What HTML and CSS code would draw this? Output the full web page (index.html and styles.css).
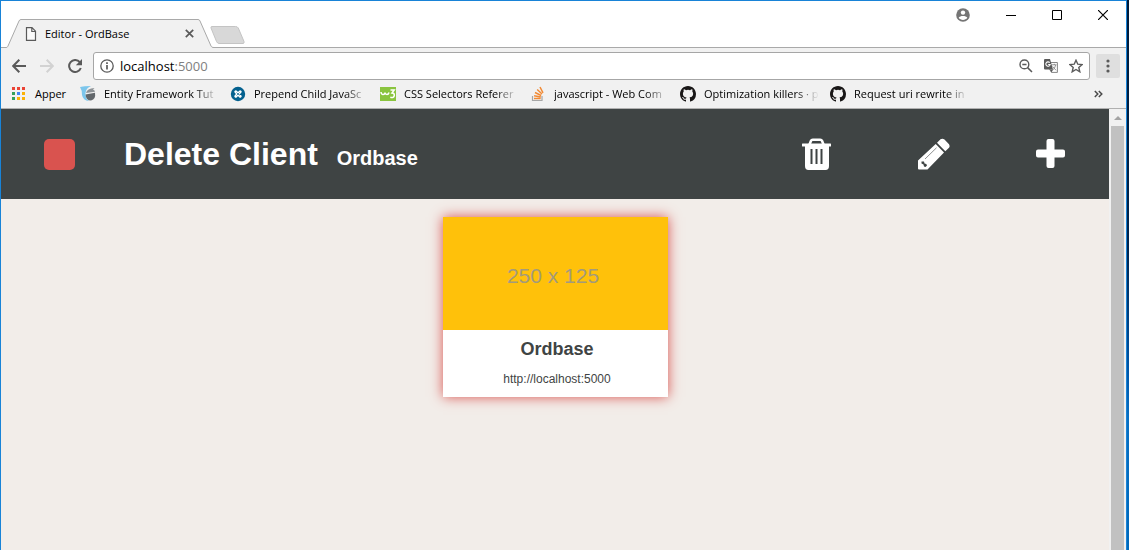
FILE: index.html
```html
<!DOCTYPE html>
<html lang="en">
<head>
<meta charset="utf-8">
<title>Editor - OrdBase</title>
<link rel="stylesheet" href="styles.css">
</head>
<body>
<div class="window">
  <div class="tabstrip">
    <div class="tab">
      <svg class="tab-shape" viewBox="0 0 208 29" preserveAspectRatio="none"><path d="M0 28.5C1 28.5 1.5 28 2 27L13 2Q13.600 .5 15 .5H192Q193.500 .5 194 2L205 27C205.500 28 206.500 28.500 208 28.500V29H0Z" fill="#f1f1f1"/><path d="M0 28.500C1 28.500 1.500 28 2 27L13 2Q13.600 .5 15 .5H192Q193.500 .5 194 2L205 27C205.500 28 206.500 28.500 208 28.500" fill="none" stroke="#a9a9a9"/></svg>
      <svg class="page-icon" width="12" height="14" viewBox="0 0 12 14"><path d="M1.500 .7H7L10.500 4.200V13.300H1.500ZM6.800 .7V4.500H10.500" fill="#fafafa" stroke="#5a5a5a" stroke-width="1.200"/></svg>
      <span class="tab-title">Editor - OrdBase</span>
      <button class="plain" aria-label="Close tab"><svg width="9" height="9" viewBox="0 0 9 9"><path d="M.8.8 8.200 8.200M8.200.8.8 8.200" stroke="#5a5a5a" stroke-width="1.700"/></svg></button>
    </div>
    <button class="plain new-tab" aria-label="New tab"><svg width="35" height="18" viewBox="0 0 35 18"><path d="M2 .5H25.500Q27.500 .5 28.300 2L34 15.500Q34.500 17.500 33 17.500H9Q7.500 17.500 6.500 15.500L1 2Q.5 .5 2 .5Z" fill="#d8d8d8" stroke="#c4c4c4"/></svg></button>
    <div class="window-buttons">
      <button class="plain" aria-label="Profile"><svg width="14" height="14" viewBox="0 0 14 14"><circle cx="7" cy="7" r="6.800" fill="#757575"/><circle cx="7" cy="4.600" r="2.200" fill="#fff"/><path d="M2.700 9.800C3.800 7.400 10.200 7.400 11.300 9.800 9.500 12.600 4.500 12.600 2.700 9.800Z" fill="#fff"/></svg></button>
      <button class="plain" aria-label="Minimize"><svg width="10" height="10" viewBox="0 0 10 10"><path d="M0 5.500H10" stroke="#000"/></svg></button>
      <button class="plain" aria-label="Maximize"><svg width="10" height="10" viewBox="0 0 10 10"><path d="M.5.5H9.500V9.500H.5Z" fill="none" stroke="#000"/></svg></button>
      <button class="plain" aria-label="Close"><svg width="10" height="10" viewBox="0 0 10 10"><path d="M0 0 10 10M10 0 0 10" stroke="#000" stroke-width="1.200"/></svg></button>
    </div>
  </div>

  <div class="toolbar">
    <div class="nav">
      <button class="plain" aria-label="Back"><svg width="14" height="14" viewBox="0 0 14 14"><path d="M14 7H1.500M7.300 .8 1.200 7 7.300 13.200" fill="none" stroke="#5a5a5a" stroke-width="2"/></svg></button>
      <button class="plain" aria-label="Forward"><svg width="14" height="14" viewBox="0 0 14 14"><path d="M0 7H12.500M6.700 .8 12.800 7 6.700 13.200" fill="none" stroke="#d2d2d2" stroke-width="2"/></svg></button>
      <button class="plain" aria-label="Reload"><svg width="14" height="14" viewBox="0 0 14 14"><path d="M11.800 3.200A6 6 0 1 0 12.800 9" fill="none" stroke="#5a5a5a" stroke-width="2"/><path d="M14 0V6.200H7.800Z" fill="#5a5a5a"/></svg></button>
    </div>
    <div class="omnibox">
      <svg width="14" height="14" viewBox="0 0 14 14"><circle cx="7" cy="7" r="6.200" fill="none" stroke="#5a5a5a" stroke-width="1.300"/><path d="M7 6V10.500M7 3.200V5" stroke="#5a5a5a" stroke-width="1.700"/></svg>
      <a class="address" href="#">localhost<span class="port">:5000</span></a>
      <button class="plain" aria-label="Zoom"><svg width="14" height="14" viewBox="0 0 14 14"><circle cx="5.400" cy="5.400" r="4.400" fill="none" stroke="#5a5a5a" stroke-width="1.400"/><path d="M3.300 5.400H7.500M8.600 8.600 13 13" stroke="#5a5a5a" stroke-width="1.500"/></svg></button>
      <button class="plain" aria-label="Translate"><svg width="14" height="14" viewBox="0 0 14 14"><path d="M5.500 3.500H13.400V13.400H7.500L5.500 10" fill="#fff" stroke="#777" stroke-width=".9"/><path d="M7.500 5.800H12.500M10.300 4.800V6M8.200 11.500Q11 9.500 11.700 6M8.700 7.500 12 11.300" fill="none" stroke="#888" stroke-width=".9"/><path d="M1 0H6L9 10.500H1Q0 10.500 0 9.500V1Q0 0 1 0Z" fill="#5a5a5a"/><path d="M5.700 3.600A2.200 2.200 0 1 0 6.200 5.500H4.200" fill="none" stroke="#fff" stroke-width="1.100"/><path d="M6 10.500H9L7.500 13.400Z" fill="#5a5a5a"/></svg></button>
      <button class="plain" aria-label="Bookmark this page"><svg width="14" height="14" viewBox="0 0 14 14"><path d="M7 1.200 8.800 5.200 13.100 5.600 9.800 8.500 10.800 12.800 7 10.500 3.200 12.800 4.200 8.500 .9 5.600 5.200 5.200Z" fill="none" stroke="#5a5a5a" stroke-width="1.400"/></svg></button>
    </div>
    <button class="plain menu" aria-label="Menu"><svg width="4" height="14" viewBox="0 0 4 14"><g fill="#5a5a5a"><circle cx="2" cy="2" r="1.600"/><circle cx="2" cy="7" r="1.600"/><circle cx="2" cy="12" r="1.600"/></g></svg></button>
  </div>

  <nav class="bookmarks">
    <a class="bookmark apps" href="#"><svg width="16" height="16" viewBox="0 0 16 16"><path d="M1 1h3v3H1zM6 1h3v3H6zM11 1h3v3h-3z" fill="#ea4335"/><path d="M1 6h3v3H1zM1 11h3v3H1z" fill="#34a05a"/><path d="M6 6h3v3H6z" fill="#4285f4"/><path d="M11 6h3v3h-3zM6 11h3v3H6zM11 11h3v3h-3z" fill="#fbb105"/></svg><span>Apper</span></a>
    <a class="bookmark" href="#"><svg width="16" height="16" viewBox="0 0 16 16"><path d="M0 1Q4 0 11 0 6 2 5.500 7 5 12 9 15 3 14.500 2 9 2 4 0 1Z" fill="#7cc6ec"/><path d="M6 7Q7 2.500 14.500 2L13 3.600Q15 4.500 15 5.800Z" fill="#8d9296"/><path d="M5.500 8.500 15 6.800Q16 13.500 11 14.500 6 14.500 5.500 8.500Z" fill="#62676b"/></svg><span>Entity Framework Tut</span></a>
    <a class="bookmark" href="#"><svg width="16" height="16" viewBox="0 0 16 16"><circle cx="8" cy="8" r="7.200" fill="#04618f"/><path d="M5.800 5.800 10.200 10.200M10.200 5.800 5.800 10.200" stroke="#fff" stroke-width="3" stroke-linecap="round"/><path d="M6.500 6.500 9.500 9.500M9.500 6.500 6.500 9.500" stroke="#04618f" stroke-width=".7"/></svg><span>Prepend Child JavaSc</span></a>
    <a class="bookmark" href="#"><svg width="16" height="16" viewBox="0 0 16 16"><path d="M0 1H16V15H0Z" fill="#8ac43f"/><path d="M1 6Q1.300 8.500 3 8.500 5 8.500 5 6.500 5.300 8.500 7 8.500 8.500 8.500 9 6.500M10.500 4H14.200L12 7Q14.500 7 14.300 9.500 13.800 12.300 10.300 11.300" fill="none" stroke="#fff" stroke-width="1.500"/></svg><span>CSS Selectors Referer</span></a>
    <a class="bookmark" href="#"><svg width="16" height="16" viewBox="0 0 16 16"><path d="M2.500 10V14.500H12V10" fill="none" stroke="#a6a6a6" stroke-width="1.200"/><path d="M4 12.500H10.700M4.100 9.700 10.800 11M5 6.500 11.200 9.500M7.200 3.500 12 8M10 1 13 6.800" fill="none" stroke="#f18a35" stroke-width="1.500"/></svg><span>javascript - Web Com</span></a>
    <a class="bookmark" href="#"><svg width="16" height="16" viewBox="0 0 16 16"><path fill="#191717" d="M8 0C3.580 0 0 3.580 0 8c0 3.540 2.290 6.530 5.470 7.590.4.070.55-.17.55-.38 0-.19-.01-.82-.01-1.490-2.010.37-2.530-.49-2.690-.94-.09-.23-.48-.94-.82-1.130-.28-.15-.68-.52-.01-.53.63-.01 1.080.58 1.230.82.72 1.210 1.870.87 2.330.66.070-.52.28-.87.51-1.070-1.780-.2-3.640-.89-3.640-3.950 0-.87.31-1.590.82-2.150-.08-.2-.36-1.020.08-2.120 0 0 .67-.21 2.200.82a7.600 7.600 0 0 1 4 0c1.530-1.040 2.200-.82 2.200-.82.44 1.100.16 1.920.08 2.120.51.56.82 1.270.82 2.150 0 3.070-1.870 3.750-3.650 3.950.29.25.54.73.54 1.480 0 1.070-.01 1.930-.01 2.200 0 .21.15.46.55.38A8 8 0 0 0 16 8c0-4.420-3.580-8-8-8Z"/></svg><span>Optimization killers · p</span></a>
    <a class="bookmark" href="#"><svg width="16" height="16" viewBox="0 0 16 16"><path fill="#191717" d="M8 0C3.580 0 0 3.580 0 8c0 3.540 2.290 6.530 5.470 7.590.4.070.55-.17.55-.38 0-.19-.01-.82-.01-1.490-2.010.37-2.530-.49-2.690-.94-.09-.23-.48-.94-.82-1.130-.28-.15-.68-.52-.01-.53.63-.01 1.080.58 1.230.82.72 1.210 1.870.87 2.330.66.070-.52.28-.87.51-1.070-1.780-.2-3.640-.89-3.640-3.950 0-.87.31-1.590.82-2.150-.08-.2-.36-1.020.08-2.120 0 0 .67-.21 2.200.82a7.600 7.600 0 0 1 4 0c1.530-1.040 2.200-.82 2.200-.82.44 1.100.16 1.920.08 2.120.51.56.82 1.270.82 2.150 0 3.070-1.870 3.750-3.650 3.950.29.25.54.73.54 1.480 0 1.070-.01 1.930-.01 2.200 0 .21.15.46.55.38A8 8 0 0 0 16 8c0-4.420-3.580-8-8-8Z"/></svg><span>Request uri rewrite in</span></a>
    <button class="plain more" aria-label="More bookmarks"><svg width="9" height="8" viewBox="0 0 9 8"><path d="M.8 1 3.800 4 .8 7M4.800 1 7.800 4 4.800 7" fill="none" stroke="#4a4a4a" stroke-width="1.500"/></svg></button>
  </nav>

  <div class="viewport">
    <div class="page">
      <header class="header">
        <button class="plain stop" aria-label="Cancel"></button>
        <h1 class="title">Delete Client <small class="subtitle">Ordbase</small></h1>
        <div class="actions">
          <button class="plain" aria-label="Delete"><svg width="32" height="32" viewBox="0 0 32 32"><path d="M8.500 6.500 10 2.800Q10.500 1.700 11.700 1.700H19.300Q20.500 1.700 21 2.800L22.500 6.500" fill="none" stroke="#fff" stroke-width="2.600"/><path fill="#fff" fill-rule="evenodd" d="M1.500 5.500H29.500Q30 5.500 30 6V8Q30 8.500 29.500 8.500H28V28Q28 32 24.500 32H7.500Q4 32 4 28V8.500H1.500Q1 8.500 1 8V6Q1 5.500 1.500 5.500ZM9.500 11V26H11.500V11ZM14.500 11V26H16.500V11ZM19.500 11V26H21.500V11Z"/></svg></button>
          <button class="plain" aria-label="Edit"><svg width="32" height="32" viewBox="0 0 32 32"><path fill="#fff" d="M0 22.500 17.700 6 26 14.500 9.500 31.500H1Q0 31.500 0 30.500ZM19 4.800 22.500 1.300Q24.500 0 26.500 1.500L31 6.200Q32.200 8.300 31 9.800L27.300 13.300Z"/><path d="M7 21 18.500 9.800" stroke="#3f4444" stroke-width=".6"/><path fill="#3f4444" d="M3.500 23.500 6 23.500 6.500 25.500 8.300 26 9 27.500 7.500 29 6 28.500 5.500 26.500 3.500 25.500Z"/></svg></button>
          <button class="plain" aria-label="Add"><svg width="32" height="32" viewBox="0 0 32 32"><path fill="#fff" d="M13.500 1H17.500Q19.500 1 19.500 3V11.500H28Q30 11.500 30 13.500V17.500Q30 19.500 28 19.500H19.500V28Q19.500 30 17.500 30H13.500Q11.500 30 11.500 28V19.500H3Q1 19.500 1 17.500V13.500Q1 11.500 3 11.500H11.500V3Q11.500 1 13.500 1Z"/></svg></button>
        </div>
      </header>
      <main class="content">
        <article class="card">
          <div class="placeholder">250 x 125</div>
          <div class="card-body">
            <h2 class="card-title">Ordbase</h2>
            <a class="card-url" href="#">http://localhost:5000</a>
          </div>
        </article>
      </main>
    </div>
    <div class="scrollbar">
      <svg width="8" height="4" viewBox="0 0 8 4"><path d="M4 0 8 4H0Z" fill="#a3a3a3"/></svg>
      <div class="thumb"></div>
    </div>
  </div>
</div>
</body>
</html>
```

FILE: styles.css
```css
* { box-sizing: border-box; }

body {
  margin: 0;
  padding-right: 2px;
  min-height: 100vh;
  display: flex;
  background: linear-gradient(#001a38 0, #00244c 45%, #0057a8 68%, #0a6fc0 76%, #0068b8 100%);
  font-family: "Open Sans", "Noto Sans", sans-serif;
  font-size: 12px;
  color: #000;
}

svg { display: block; flex: none; }
a { color: inherit; text-decoration: none; }

.plain {
  display: flex;
  align-items: center;
  justify-content: center;
  padding: 0;
  border: 0;
  background: none;
}

.window {
  flex: 1;
  min-width: 0;
  display: flex;
  flex-direction: column;
  border: 1px solid #1883d7;
  border-bottom: 0;
  background: #f1f1f1;
}

/* Tab strip */
.tabstrip {
  display: flex;
  align-items: flex-end;
  height: 47px;
  padding-left: 5px;
  background: #fff;
  border-bottom: 1px solid #a9a9a9;
}

.tab {
  position: relative;
  display: flex;
  align-items: center;
  gap: 8px;
  width: 208px;
  height: 29px;
  margin-bottom: -1px;
  padding: 0 20px 0 19px;
}

.tab > * { position: relative; }

.tab > .tab-shape {
  position: absolute;
  inset: 0;
  width: 100%;
  height: 100%;
}

.tab-title { flex: 1; font-size: 11px; }

.new-tab { align-self: flex-end; margin: 0 0 3px -4px; }

.window-buttons {
  display: flex;
  align-self: flex-start;
  align-items: center;
  gap: 36px;
  height: 28px;
  margin-left: auto;
  padding-right: 18px;
}

/* Toolbar */
.toolbar {
  display: flex;
  align-items: center;
  gap: 6px;
  height: 36px;
  padding: 0 6px 0 11px;
}

.nav { display: flex; gap: 14px; margin-right: 5px; }

.omnibox {
  flex: 1;
  display: flex;
  align-items: center;
  gap: 11px;
  height: 28px;
  padding: 0 6px;
  background: #fff;
  border: 1px solid #a6a6a6;
  border-radius: 3px;
}

.address { flex: 1; margin-left: -5px; font-size: 13px; }
.port { color: #808080; }

.menu {
  width: 24px;
  height: 24px;
  border-radius: 2px;
  background: #dfdfdf;
}

/* Bookmarks */
.bookmarks {
  display: flex;
  align-items: center;
  gap: 12px;
  height: 25px;
  padding: 0 23px 5px 10px;
  border-bottom: 1px solid #b0b0b0;
}

.bookmark {
  display: flex;
  align-items: center;
  gap: 8px;
  width: 138px;
  white-space: nowrap;
  font-size: 11px;
}

.bookmark span {
  flex: 1;
  -webkit-mask-image: linear-gradient(to right, #000 80%, transparent);
  mask-image: linear-gradient(to right, #000 80%, transparent);
}

.bookmark.apps { width: 57px; }

.bookmark.apps span {
  -webkit-mask-image: none;
  mask-image: none;
}

.more { margin-left: auto; }

/* Page */
.viewport { flex: 1; display: flex; }

.page {
  flex: 1;
  background: #f2ede9;
  color: #3f4444;
  font-family: "Liberation Sans", Arial, sans-serif;
}

.header {
  display: flex;
  align-items: center;
  height: 90px;
  padding: 0 42px 0 43px;
  background: #3f4444;
  color: #fff;
}

.stop {
  width: 31px;
  height: 31px;
  border-radius: 5px;
  background: #d9534f;
}

.title {
  flex: 1;
  margin: 0;
  padding: 4px 0 0 49px;
  font-size: 32px;
  line-height: 40px;
}

.subtitle { margin-left: 10px; font-size: 20px; }

.actions { display: flex; gap: 85px; }

.content { display: flex; justify-content: center; padding: 18px; }

.card {
  width: 225px;
  background: #fff;
  box-shadow: 0 0 12px #d9534f;
  text-align: center;
}

.placeholder {
  display: flex;
  align-items: center;
  justify-content: center;
  height: 113px;
  padding-top: 4px;
  padding-right: 4px;
  background: #ffc10a;
  color: #a39a7c;
  font-size: 21px;
}

.card-body {
  display: flex;
  flex-direction: column;
  gap: 11px;
  padding: 9px 0 10px 4px;
}

.card-title { margin: 0; font-size: 18px; line-height: 21px; }
.card-url { font-size: 12px; line-height: 16px; }

/* Scrollbar */
.scrollbar {
  display: flex;
  flex-direction: column;
  align-items: center;
  gap: 6px;
  width: 17px;
  padding-top: 7px;
  background: #f1f1f1;
}

.thumb { flex: 1; width: 13px; background: #c1c1c1; }
```
